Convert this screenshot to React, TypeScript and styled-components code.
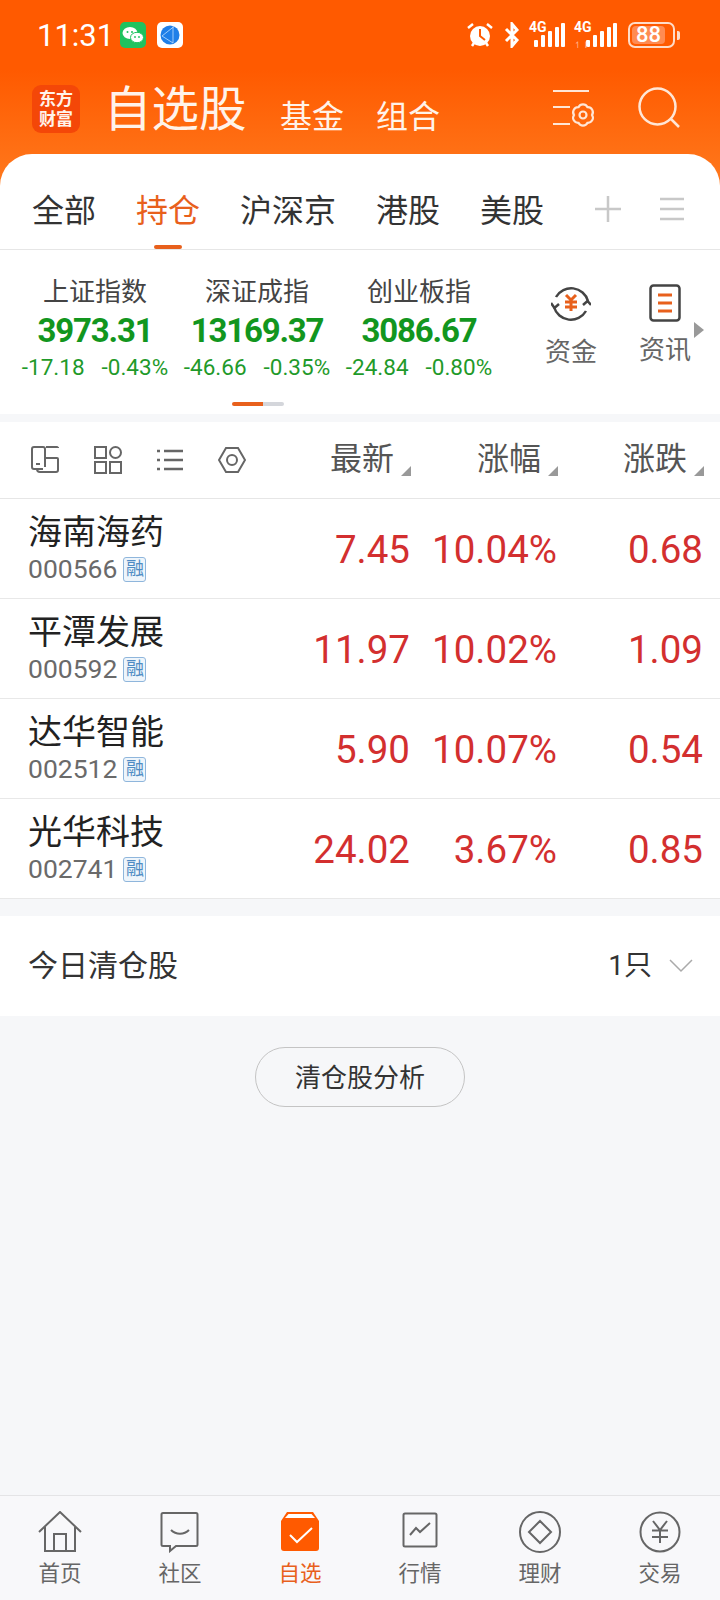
import styled, { createGlobalStyle } from 'styled-components'

const stocks = [
  { name: '海南海药', code: '000566', price: '7.45', pct: '10.04%', diff: '0.68' },
  { name: '平潭发展', code: '000592', price: '11.97', pct: '10.02%', diff: '1.09' },
  { name: '达华智能', code: '002512', price: '5.90', pct: '10.07%', diff: '0.54' },
  { name: '光华科技', code: '002741', price: '24.02', pct: '3.67%', diff: '0.85' },
]

const indexes = [
  { name: '上证指数', value: '3973.31', diff: '-17.18', pct: '-0.43%' },
  { name: '深证成指', value: '13169.37', diff: '-46.66', pct: '-0.35%' },
  { name: '创业板指', value: '3086.67', diff: '-24.84', pct: '-0.80%' },
]

const tabs = ['全部', '持仓', '沪深京', '港股', '美股']

const Signal = ({ roaming }: { roaming?: boolean }) => (
  <SignalBox $wide={roaming}>
    <SignalText>4G</SignalText>
    {roaming ? <RoamArrows>↿⇂</RoamArrows> : null}
    <svg width="32" height="26" viewBox="0 0 32 26">
      <g fill="#fff">
        <rect x="1" y="18" width="4" height="7" rx="1" />
        <rect x="8" y="13" width="4" height="12" rx="1" />
        <rect x="15" y="9" width="4" height="16" rx="1" />
        <rect x="22" y="5" width="4" height="20" rx="1" />
        <rect x="28" y="1" width="4" height="24" rx="1" />
      </g>
    </svg>
  </SignalBox>
)

const NavIcon = ({ kind }: { kind: string }) => {
  if (kind === 'home') {
    return (
      <svg width="44" height="42" viewBox="0 0 44 42" fill="none" stroke="#666" strokeWidth="2">
        <path d="M1 21 22 1l21 20" />
        <path d="M7 16v24h30V16" />
        <path d="M16 40V23h12v17" />
      </svg>
    )
  }
  if (kind === 'chat') {
    return (
      <svg width="40" height="42" viewBox="0 0 40 42" fill="none" stroke="#666" strokeWidth="2">
        <path d="M3 2h33a1.500 1.500 0 0 1 1.500 1.500v30a1.500 1.500 0 0 1-1.500 1.500H16l-6 5v-5H3a1.500 1.500 0 0 1-1.500-1.500v-30A1.500 1.500 0 0 1 3 2z" />
        <path d="M11 19c5 5 13 5 18 0" />
      </svg>
    )
  }
  if (kind === 'pick') {
    return (
      <svg width="40" height="42" viewBox="0 0 40 42">
        <path d="M7 1h26l6 9v27a3 3 0 0 1-3 3H4a3 3 0 0 1-3-3V10z" fill="#ff5a00" />
        <path d="M5 7 8.500 3h23L35 7z" fill="#fff" />
        <path d="m10 24 7 7 15-14" fill="none" stroke="#fff" strokeWidth="2" />
      </svg>
    )
  }
  if (kind === 'market') {
    return (
      <svg width="36" height="37" viewBox="0 -1 36 37" fill="none" stroke="#666" strokeWidth="2">
        <rect x="1.500" y="1.500" width="33" height="33" rx="1.500" />
        <path d="m8 23 6-7 4 4 10-9" />
      </svg>
    )
  }
  if (kind === 'wealth') {
    return (
      <svg width="42" height="42" viewBox="0 0 42 42" fill="none" stroke="#666" strokeWidth="2">
        <circle cx="21" cy="21" r="20" />
        <path d="m21 10 11 11-11 11-11-11z" />
      </svg>
    )
  }
  return (
    <svg width="42" height="42" viewBox="0 0 42 42" fill="none" stroke="#666" strokeWidth="2">
      <circle cx="21" cy="21" r="19.500" />
      <path d="m14 10 7 9 7-9M13 19.500h16M13 26h16M21 19v13" />
    </svg>
  )
}

const navItems = [
  { kind: 'home', label: '首页' },
  { kind: 'chat', label: '社区' },
  { kind: 'pick', label: '自选' },
  { kind: 'market', label: '行情' },
  { kind: 'wealth', label: '理财' },
  { kind: 'trade', label: '交易' },
]

export default function App() {
  return (
    <Page>
      <GlobalStyle />
      <StatusBar>
        <StatusLeft>
          <Clock>11:31</Clock>
          <AppBadge $bg="#1fc25f">
            <svg width="22" height="18" viewBox="0 0 22 18">
              <ellipse cx="8" cy="7" rx="7.500" ry="6" fill="#fff" />
              <ellipse cx="15" cy="11.500" rx="6.500" ry="5.200" fill="#fff" stroke="#1fc25f" />
              <circle cx="13" cy="11" r="0.900" fill="#1fc25f" />
              <circle cx="17" cy="11" r="0.900" fill="#1fc25f" />
              <circle cx="5.500" cy="6" r="1" fill="#1fc25f" />
              <circle cx="10" cy="6" r="1" fill="#1fc25f" />
            </svg>
          </AppBadge>
          <AppBadge $bg="#fff">
            <svg width="20" height="20" viewBox="0 0 20 20">
              <circle cx="10" cy="10" r="9.500" fill="#1f7fe8" />
              <path d="M14 1.500 2 11l11 7V1.500" fill="none" stroke="#bfe0ff" strokeWidth="0.800" />
            </svg>
          </AppBadge>
        </StatusLeft>
        <StatusRight>
          <svg width="26" height="26" viewBox="0 0 26 26">
            <circle cx="13" cy="14" r="10" fill="#fff" />
            <path d="M13 7v7l5 4" fill="none" stroke="#ff5a00" strokeWidth="2" />
            <path d="m1 6 5-4M25 6l-5-4M5 24l2-3M21 24l-2-3" stroke="#fff" strokeWidth="2.500" />
          </svg>
          <BluetoothIcon width="16" height="26" viewBox="0 0 16 26" fill="none" stroke="#fff" strokeWidth="3">
            <path d="M2 7 13 18l-5 6V2l5 6L2 19" />
          </BluetoothIcon>
          <Signal />
          <Signal roaming />
          <Battery>
            <BatteryLevel>88</BatteryLevel>
          </Battery>
          <BatteryTip />
        </StatusRight>
      </StatusBar>

      <TitleRow>
        <Logo>
          <span>东方</span>
          <span>财富</span>
        </Logo>
        <MainTitle>自选股</MainTitle>
        <SubTitle>基金</SubTitle>
        <SubTitle>组合</SubTitle>
        <TitleIcons>
          <svg width="43" height="42" viewBox="0 0 43 42" fill="none" stroke="#ffe6d6" strokeWidth="2.200">
            <path d="M0 4h36M0 20h17M0 37h17" />
            <path d="M39 28A5 5 0 0 1 34.500 35.800 5 5 0 0 1 25.500 35.800 5 5 0 0 1 21 28 5 5 0 0 1 25.500 20.200 5 5 0 0 1 34.500 20.200 5 5 0 0 1 39 28z" />
            <circle cx="30" cy="28" r="3.500" />
          </svg>
          <svg width="42" height="42" viewBox="0 0 42 42" fill="none" stroke="#ffe6d6" strokeWidth="2.500">
            <circle cx="19.500" cy="19.500" r="18" />
            <path d="m33 32 8 8" />
          </svg>
        </TitleIcons>
      </TitleRow>

      <WhiteCard>
        <TabRow>
          {tabs.map((t) => (
            <Tab key={t} $active={t === '持仓'}>
              {t}
            </Tab>
          ))}
          <TabTools>
            <svg width="26" height="26" viewBox="0 0 26 26" stroke="#c8c8c8" strokeWidth="2.500">
              <path d="M0 13h26M13 0v26" />
            </svg>
            <svg width="24" height="24" viewBox="0 0 24 24" stroke="#c8c8c8" strokeWidth="2.500">
              <path d="M0 2h24M0 12h24M0 22h24" />
            </svg>
          </TabTools>
        </TabRow>

        <IndexSection>
          <IndexRow>
            {indexes.map((item) => (
              <IndexCol key={item.name}>
                <IndexName>{item.name}</IndexName>
                <IndexValue>{item.value}</IndexValue>
                <IndexChange>
                  <span>{item.diff}</span>
                  <span>{item.pct}</span>
                </IndexChange>
              </IndexCol>
            ))}
            <ActionItem>
              <svg width="40" height="40" viewBox="0 0 40 40" fill="none">
                <path d="M5 13A17.500 17.500 0 0 1 37 17M35 27A17.500 17.500 0 0 1 3 23" stroke="#444" strokeWidth="2.500" />
                <path d="m0 19 3.500 5L8 20M32 21l4.500-4 3.500 4" stroke="#444" strokeWidth="2.500" />
                <path d="m15 11 5 5 5-5M14 18h12M14 23h12M20 16v11" stroke="#e8601c" strokeWidth="3" />
              </svg>
              <ActionLabel>资金</ActionLabel>
            </ActionItem>
            <ActionItem>
              <svg width="32" height="38" viewBox="0 0 32 38" fill="none">
                <rect x="1.500" y="1.500" width="29" height="35" rx="3" stroke="#444" strokeWidth="2.500" />
                <path d="M9 11h14M9 19h14M9 27h14" stroke="#e8601c" strokeWidth="3" />
              </svg>
              <ActionLabel>资讯</ActionLabel>
            </ActionItem>
          </IndexRow>
          <MoreCaret />
          <Pager>
            <PagerPart $on />
            <PagerPart />
          </Pager>
        </IndexSection>

        <SortHeader>
          <ToolIcons>
            <svg width="28" height="28" viewBox="0 0 28 28" fill="none" stroke="#666" strokeWidth="2">
              <path d="M14 21V3a2 2 0 0 0-2-2H3a2 2 0 0 0-2 2v18a2 2 0 0 0 2 2h9" />
              <path d="M5 18h4M15 1h11l-3-2M14 12h12a1 1 0 0 1 1 1v11a2 2 0 0 1-2 2H9a3 3 0 0 1-3-3" />
            </svg>
            <svg width="28" height="28" viewBox="0 0 28 28" fill="none" stroke="#666" strokeWidth="2">
              <rect x="1" y="1" width="11" height="11" />
              <circle cx="21.500" cy="6.500" r="5.500" />
              <rect x="1" y="16" width="11" height="11" />
              <rect x="16" y="16" width="11" height="11" />
            </svg>
            <svg width="26" height="22" viewBox="0 0 26 22" fill="none" stroke="#666" strokeWidth="2.500">
              <path d="M7 2h19M7 11h19M7 20h19M0 2h3M0 11h3M0 20h3" />
            </svg>
            <svg width="28" height="26" viewBox="0 0 28 26" fill="none" stroke="#666" strokeWidth="2">
              <path d="M8 1h12l7 12-7 12H8L1 13z" />
              <circle cx="14" cy="13" r="5" />
            </svg>
          </ToolIcons>
          {['最新', '涨幅', '涨跌'].map((h) => (
            <SortCell key={h}>
              {h}
              <SortMark />
            </SortCell>
          ))}
        </SortHeader>

        {stocks.map((s) => (
          <StockRow key={s.code}>
            <NameCell>
              <StockName>{s.name}</StockName>
              <CodeLine>
                {s.code}
                <Tag>融</Tag>
              </CodeLine>
            </NameCell>
            <Num>{s.price}</Num>
            <Num>{s.pct}</Num>
            <Num>{s.diff}</Num>
          </StockRow>
        ))}
      </WhiteCard>

      <ClearRow>
        <ClearTitle>今日清仓股</ClearTitle>
        <ClearCount>1只</ClearCount>
        <svg width="24" height="14" viewBox="0 0 24 14" fill="none" stroke="#aaa" strokeWidth="1.500">
          <path d="m1 1 11 11L23 1" />
        </svg>
      </ClearRow>

      <AnalysisWrap>
        <AnalysisButton>清仓股分析</AnalysisButton>
      </AnalysisWrap>

      <BottomNav>
        {navItems.map((n) => (
          <NavItem key={n.kind} $active={n.kind === 'pick'}>
            <NavIconBox>
              <NavIcon kind={n.kind} />
            </NavIconBox>
            {n.label}
          </NavItem>
        ))}
      </BottomNav>
    </Page>
  )
}

const GlobalStyle = createGlobalStyle`
  html, body {
    margin: 0;
    padding: 0;
  }
  body {
    font-family: Roboto, "Noto Sans CJK SC", sans-serif;
    color: #333;
  }
  * {
    box-sizing: border-box;
  }
`

const Page = styled.div`
  width: 720px;
  height: 1600px;
  overflow: hidden;
  display: flex;
  flex-direction: column;
  background: linear-gradient(180deg, #ff5a00 0, #ff5a00 70px, #ff7a1e 190px) top / 100% 190px no-repeat, #f6f7f9;
`

const StatusBar = styled.div`
  height: 70px;
  padding: 0 40px 0 37px;
  display: flex;
  align-items: center;
  justify-content: space-between;
`

const StatusLeft = styled.div`
  display: flex;
  align-items: center;
`

const Clock = styled.div`
  width: 83px;
  font-size: 31px;
  color: #fff;
`

const AppBadge = styled.div<{ $bg: string }>`
  width: 26px;
  height: 26px;
  margin-right: 11px;
  border-radius: 5px;
  background: ${(p) => p.$bg};
  display: flex;
  align-items: center;
  justify-content: center;
`

const StatusRight = styled.div`
  display: flex;
  align-items: center;
  gap: 9px;
`

const BluetoothIcon = styled.svg`
  margin-left: 2px;
`

const SignalBox = styled.div<{ $wide?: boolean }>`
  position: relative;
  width: ${(p) => (p.$wide ? '43px' : '36px')};
  height: 26px;
  display: flex;
  justify-content: flex-end;
`

const SignalText = styled.span`
  position: absolute;
  left: 0;
  top: -3px;
  font-size: 14px;
  font-weight: 700;
  color: #fff;
`

const RoamArrows = styled.span`
  position: absolute;
  left: 0;
  bottom: -2px;
  font-size: 9px;
  color: #ffb48a;
`

const Battery = styled.div`
  width: 47px;
  height: 26px;
  margin-left: 2px;
  padding: 2px;
  border: 2px solid #ffdcc8;
  border-radius: 7px;
`

const BatteryLevel = styled.div`
  width: 33px;
  height: 18px;
  border-radius: 4px;
  background: #ff8b52;
  color: #fff;
  font-size: 22px;
  font-weight: 500;
  line-height: 18px;
  text-align: center;
  white-space: nowrap;
`

const BatteryTip = styled.div`
  width: 3px;
  height: 9px;
  margin-left: -7px;
  background: #ffdcc8;
  border-radius: 0 2px 2px 0;
`

const TitleRow = styled.div`
  height: 84px;
  padding: 0 40px 0 32px;
  display: flex;
  align-items: flex-start;
  color: #fff3ea;
`

const Logo = styled.div`
  width: 48px;
  height: 48px;
  margin: 15px 24px 0 0;
  border-radius: 9px;
  background: #f44708;
  color: #fff3ea;
  font-size: 17px;
  font-weight: 700;
  line-height: 20px;
  display: flex;
  flex-direction: column;
  align-items: center;
  justify-content: center;
`

const MainTitle = styled.div`
  margin: 6px 33.5px 0 0;
  font-size: 47.5px;
  line-height: 68px;
`

const SubTitle = styled.div`
  margin: 22px 32px 0 0;
  font-size: 32px;
  line-height: 50px;
`

const TitleIcons = styled.div`
  margin: 17px 0 0 auto;
  display: flex;
  gap: 42px;
`

const WhiteCard = styled.div`
  background: #fff;
  border-radius: 32px 32px 0 0;
`

const TabRow = styled.div`
  height: 96px;
  padding: 0 36px 0 32px;
  display: flex;
  align-items: center;
  gap: 40px;
  border-bottom: 1px solid #e6e6e6;
`

const Tab = styled.div<{ $active?: boolean }>`
  position: relative;
  align-self: stretch;
  display: flex;
  align-items: center;
  padding-top: 12px;
  font-size: 32px;
  color: ${(p) => (p.$active ? '#e8601c' : '#333')};

  ${(p) =>
    p.$active &&
    `
    &::after {
      content: '';
      position: absolute;
      left: 18px;
      right: 18px;
      bottom: 0;
      height: 4px;
      border-radius: 2px;
      background: #e8601c;
    }
  `}
`

const TabTools = styled.div`
  margin-left: auto;
  padding-top: 14px;
  display: flex;
  align-items: center;
  gap: 39px;
`

const IndexSection = styled.div`
  position: relative;
  height: 164px;
  padding: 0 0 0 14px;
`

const IndexRow = styled.div`
  height: 152px;
  display: flex;
  overflow: hidden;
`

const IndexCol = styled.div`
  flex: 0 0 162px;
  padding-top: 24px;
  display: flex;
  flex-direction: column;
  align-items: center;
`

const IndexName = styled.div`
  font-size: 26px;
  line-height: 36px;
  color: #444;
`

const IndexValue = styled.div`
  font-size: 33px;
  font-weight: 700;
  line-height: 42px;
  letter-spacing: -1.2px;
  color: #12961e;
`

const IndexChange = styled.div`
  display: flex;
  gap: 17px;
  margin-top: -2px;
  font-size: 22.5px;
  line-height: 34px;
  color: #1f9a2a;
`

const ActionItem = styled.div`
  flex: 0 0 94px;
  padding-top: 34px;
  display: flex;
  flex-direction: column;
  align-items: center;

  &:nth-of-type(4) {
    margin-left: 24px;
  }
`

const ActionLabel = styled.div`
  margin-top: 10px;
  font-size: 26px;
  line-height: 36px;
  color: #666;
`

const MoreCaret = styled.div`
  position: absolute;
  left: 694px;
  top: 72px;
  width: 0;
  height: 0;
  border-style: solid;
  border-width: 8px 0 8px 10px;
  border-color: transparent transparent transparent #999;
`

const Pager = styled.div`
  width: 52px;
  height: 4px;
  margin: 0 0 0 218px;
  display: flex;
  border-radius: 2px;
  overflow: hidden;
`

const PagerPart = styled.div<{ $on?: boolean }>`
  flex: ${(p) => (p.$on ? '0 0 31px' : '1')};
  background: ${(p) => (p.$on ? '#e8601c' : '#d4d6db')};
`

const rowGrid = `
  display: grid;
  grid-template-columns: 1fr 147px 147px 146px;
  padding: 0 17px 0 28px;
`

const SortHeader = styled.div`
  ${rowGrid}
  height: 85px;
  padding-right: 16px;
  align-items: center;
  border-top: 8px solid #f6f7f9;
  border-bottom: 1px solid #e6e6e6;
`

const ToolIcons = styled.div`
  padding-left: 3px;
  display: flex;
  align-items: center;
  gap: 35px;
`

const SortCell = styled.div`
  position: relative;
  margin-bottom: 8px;
  padding-right: 17px;
  text-align: right;
  font-size: 32px;
  color: #555;
`

const SortMark = styled.span`
  position: absolute;
  right: 0;
  bottom: 3px;
  width: 10px;
  height: 10px;
  background: #999;
  clip-path: polygon(100% 0, 100% 100%, 0 100%);
`

const StockRow = styled.div`
  ${rowGrid}
  height: 100px;
  align-items: center;
  border-bottom: 1px solid #e8e8e8;
`

const NameCell = styled.div`
  display: flex;
  flex-direction: column;
  margin-top: -2px;
`

const StockName = styled.div`
  font-size: 34px;
  line-height: 43px;
  color: #222;
`

const CodeLine = styled.div`
  display: flex;
  align-items: center;
  gap: 6px;
  font-size: 26.5px;
  line-height: 30px;
  color: #6a6a6a;
`

const Tag = styled.span`
  width: 23px;
  height: 25px;
  border: 1px solid #8fb6dc;
  border-radius: 3px;
  background: #eef5fb;
  color: #4f8cc4;
  font-size: 18px;
  line-height: 22px;
  text-align: center;
`

const Num = styled.div`
  margin-top: 2px;
  text-align: right;
  font-size: 38.5px;
  color: #d32f2f;
`

const ClearRow = styled.div`
  height: 100px;
  margin-top: 17px;
  padding: 0 27px 0 28px;
  background: #fff;
  display: flex;
  align-items: center;
`

const ClearTitle = styled.div`
  flex: 1;
  margin-top: -7px;
  font-size: 30px;
  color: #333;
`

const ClearCount = styled.div`
  margin: -6px 17px 0 0;
  font-size: 28px;
  color: #333;
`

const AnalysisWrap = styled.div`
  padding-top: 31px;
  display: flex;
  justify-content: center;
`

const AnalysisButton = styled.div`
  width: 210px;
  height: 60px;
  border: 1px solid #c4c4c4;
  border-radius: 30px;
  font-size: 26px;
  line-height: 60px;
  text-align: center;
  color: #333;
`

const BottomNav = styled.div`
  height: 105px;
  margin-top: auto;
  border-top: 1px solid #e4e4e6;
  background: #f8f8fa;
  display: grid;
  grid-template-columns: repeat(6, 1fr);
`

const NavItem = styled.div<{ $active?: boolean }>`
  display: flex;
  flex-direction: column;
  align-items: center;
  font-size: 21.5px;
  line-height: 28px;
  color: ${(p) => (p.$active ? '#e8601c' : '#666')};
`

const NavIconBox = styled.div`
  height: 64px;
  padding-top: 15px;
  display: flex;
  align-items: flex-start;
  justify-content: center;
`
